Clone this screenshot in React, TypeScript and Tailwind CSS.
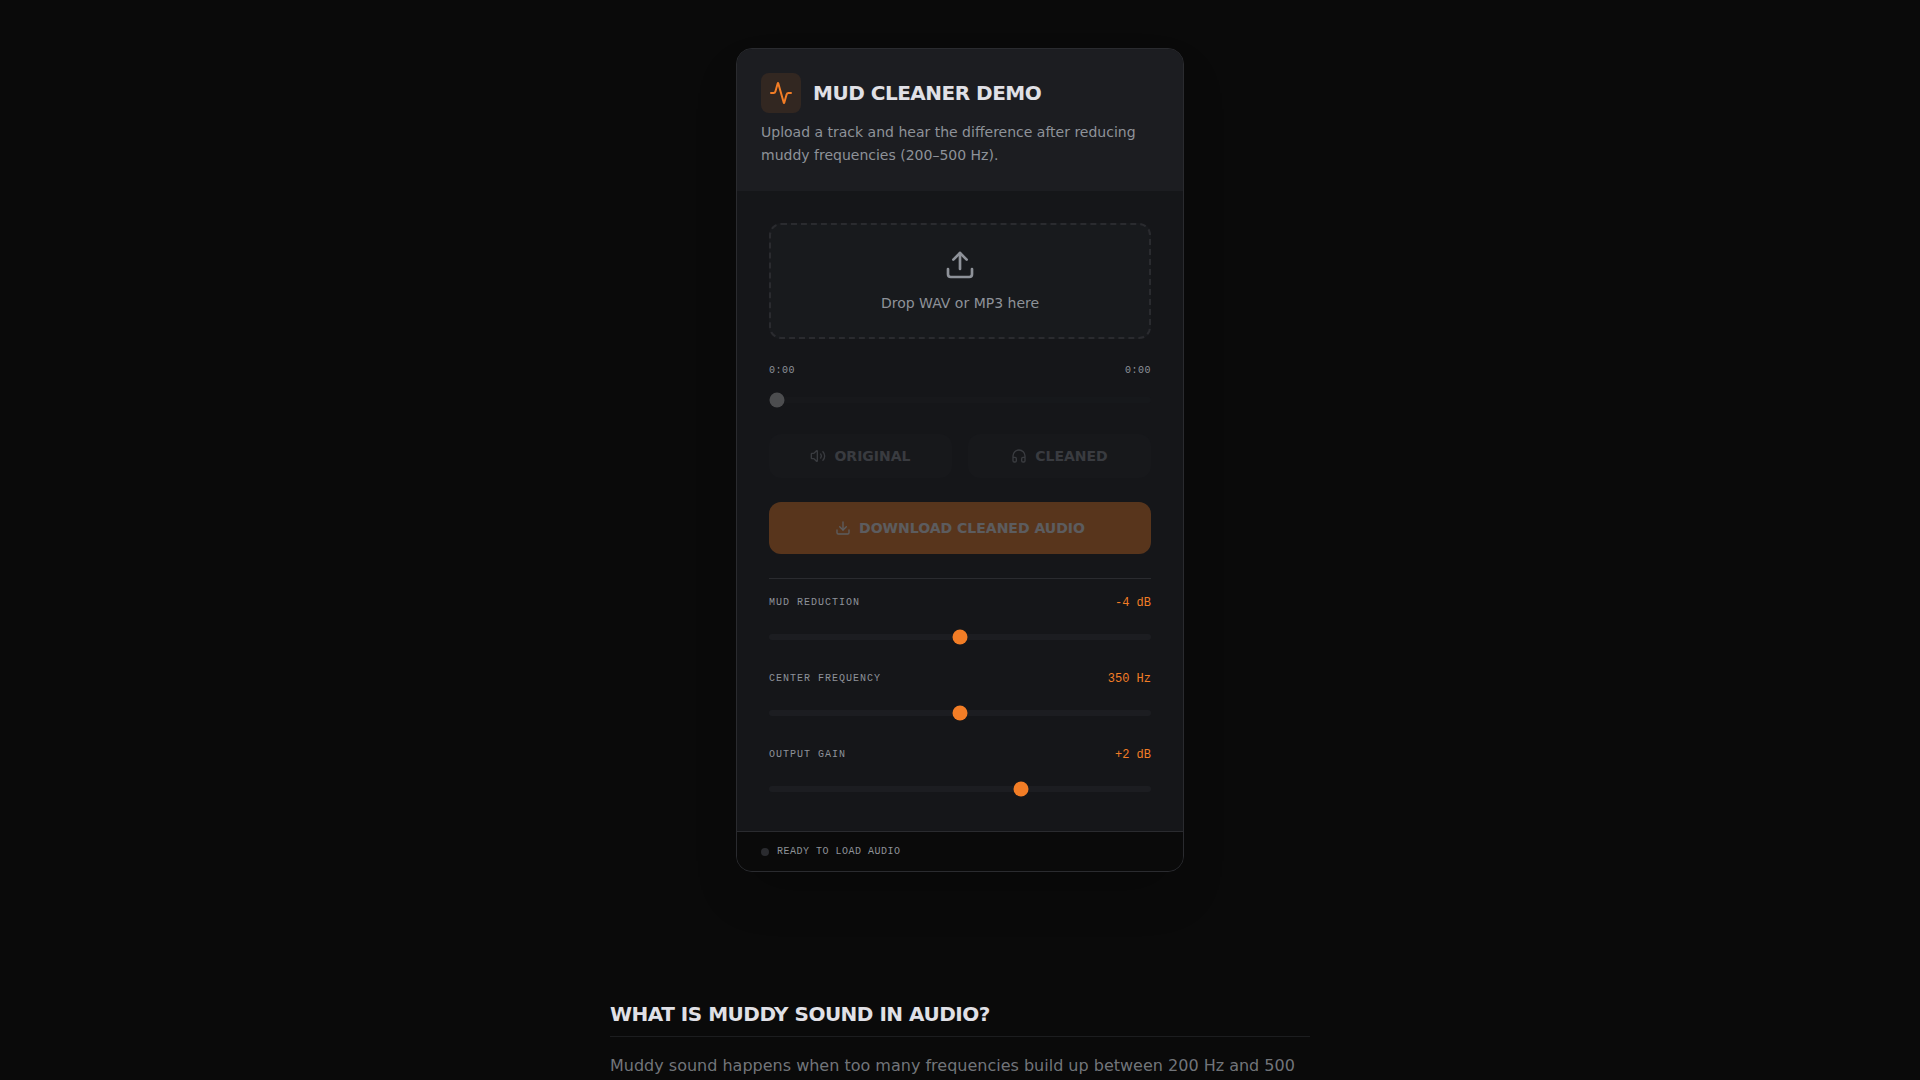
import { useRef, useState } from 'react';
import { Activity, Download, Headphones, Upload, Volume2 } from 'lucide-react';

const RANGE_CLASS =
  'h-1.5 w-full cursor-pointer appearance-none rounded-full bg-[#1c1d21] accent-[#f27d26] disabled:opacity-30';

interface ControlProps {
  id: string;
  label: string;
  value: number;
  min: number;
  max: number;
  display: string;
  onChange: (value: number) => void;
}

function Control({ id, label, value, min, max, display, onChange }: ControlProps) {
  return (
    <div className="space-y-4">
      <div className="flex justify-between font-['Liberation_Mono',monospace]">
        <label htmlFor={id} className="text-[10px] uppercase leading-[15px] tracking-widest text-[#8e9299]">
          {label}
        </label>
        <output htmlFor={id} className="text-xs text-[#f27d26]">
          {display}
        </output>
      </div>
      <div className="flex h-5 items-center">
        <input
          id={id}
          type="range"
          min={min}
          max={max}
          value={value}
          onChange={(e) => onChange(Number(e.target.value))}
          className={RANGE_CLASS}
        />
      </div>
    </div>
  );
}

const formatTime = (seconds: number) => {
  const m = Math.floor(seconds / 60);
  const s = Math.floor(seconds % 60);
  return `${m}:${String(s).padStart(2, '0')}`;
};

const formatDb = (db: number) => `${db > 0 ? '+' : ''}${db} dB`;

export default function App() {
  const fileRef = useRef<HTMLInputElement>(null);
  const [fileName, setFileName] = useState('');
  const [time, setTime] = useState(0);
  const [reduction, setReduction] = useState(-4);
  const [frequency, setFrequency] = useState(350);
  const [gain, setGain] = useState(2);

  const loaded = fileName !== '';

  return (
    <div className="flex min-h-screen flex-col items-center bg-[#0a0a0a] px-4 pt-12 font-['DejaVu_Sans',sans-serif] text-[#e0e0e6]">
      <main className="w-full max-w-md overflow-hidden rounded-2xl border border-[#2a2b2f] bg-[#151619] shadow-2xl">
        <header className="bg-[#1c1d21] p-6">
          <div className="mb-2 flex items-center gap-3">
            <div className="flex size-10 items-center justify-center rounded-lg bg-[#f27d26]/10">
              <Activity size={24} className="text-[#f27d26]" />
            </div>
            <h1 className="text-xl font-bold uppercase tracking-tight">Mud Cleaner Demo</h1>
          </div>
          <p className="text-sm leading-[23px] text-[#8e9299]">
            Upload a track and hear the difference after reducing muddy frequencies (200–500 Hz).
          </p>
        </header>

        <div className="space-y-6 p-8">
          <button
            type="button"
            onClick={() => fileRef.current?.click()}
            className="flex w-full flex-col items-center gap-3 rounded-xl border-2 border-dashed border-[#2a2b2f] bg-[#1c1d21]/50 p-6 text-[#8e9299]"
          >
            <Upload size={32} />
            <span className="text-sm">{fileName || 'Drop WAV or MP3 here'}</span>
          </button>
          <input
            ref={fileRef}
            type="file"
            accept="audio/*"
            aria-label="Audio file"
            className="hidden"
            onChange={(e) => setFileName(e.target.files?.[0]?.name ?? '')}
          />

          <div className="space-y-3">
            <div className="flex justify-between font-['Liberation_Mono',monospace] text-[10px] leading-[15px] tracking-wider text-[#8e9299]">
              <span>{formatTime(time)}</span>
              <span>{formatTime(0)}</span>
            </div>
            <div className="flex h-5 items-center">
              <input
                type="range"
                min={0}
                max={100}
                value={time}
                disabled={!loaded}
                aria-label="Playback position"
                onChange={(e) => setTime(Number(e.target.value))}
                className={RANGE_CLASS}
              />
            </div>
          </div>

          <div className="grid grid-cols-2 gap-4">
            <button
              type="button"
              disabled={!loaded}
              className="flex items-center justify-center gap-2 rounded-xl bg-[#1c1d21] py-3 text-sm font-bold uppercase text-[#8e9299] disabled:opacity-30"
            >
              <Volume2 size={16} />
              Original
            </button>
            <button
              type="button"
              disabled={!loaded}
              className="flex items-center justify-center gap-2 rounded-xl bg-[#1c1d21] py-3 text-sm font-bold uppercase text-[#8e9299] disabled:opacity-30"
            >
              <Headphones size={16} />
              Cleaned
            </button>
          </div>

          <button
            type="button"
            disabled={!loaded}
            className="flex w-full items-center justify-center gap-2 rounded-xl bg-[#f27d26] py-4 text-sm font-bold uppercase text-white disabled:opacity-30"
          >
            <Download size={16} />
            Download Cleaned Audio
          </button>

          <div className="space-y-6 border-t border-[#2a2b2f] pt-4">
            <Control
              id="reduction"
              label="Mud Reduction"
              min={-8}
              max={0}
              value={reduction}
              display={formatDb(reduction)}
              onChange={setReduction}
            />
            <Control
              id="frequency"
              label="Center Frequency"
              min={200}
              max={500}
              value={frequency}
              display={`${frequency} Hz`}
              onChange={setFrequency}
            />
            <Control
              id="gain"
              label="Output Gain"
              min={-6}
              max={6}
              value={gain}
              display={formatDb(gain)}
              onChange={setGain}
            />
          </div>
        </div>

        <footer className="flex items-center gap-2 border-t border-[#2a2b2f] bg-[#0a0a0a] px-6 py-3">
          <span className="size-2 rounded-full bg-[#2a2b2f]" />
          <span className="font-['Liberation_Mono',monospace] text-[10px] uppercase leading-[15px] tracking-wider text-[#8e9299]">
            {loaded ? 'Audio loaded' : 'Ready to load audio'}
          </span>
        </footer>
      </main>

      <section className="mt-32 w-full max-w-[700px]">
        <h2 className="mb-4 border-b border-[#1c1d1f] pb-2 text-xl font-bold uppercase tracking-tight">
          What is muddy sound in audio?
        </h2>
        <p className="text-base leading-[26px] text-[#8e9299]/80">
          Muddy sound happens when too many frequencies build up between 200 Hz and 500
        </p>
      </section>
    </div>
  );
}
